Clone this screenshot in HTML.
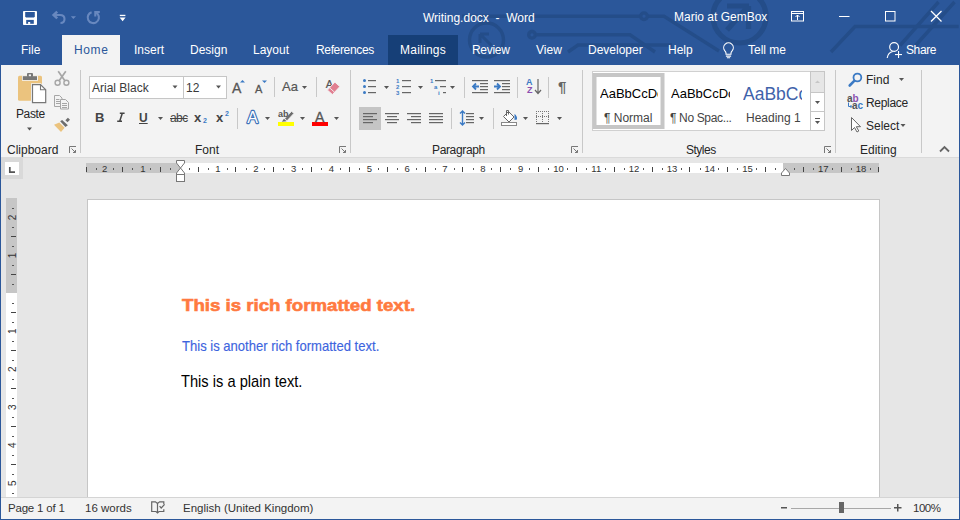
<!DOCTYPE html>
<html><head><meta charset="utf-8">
<style>
*{margin:0;padding:0;box-sizing:border-box}
html,body{width:960px;height:520px;overflow:hidden}
body{position:relative;background:#2B579A;font-family:"Liberation Sans",sans-serif;font-size:12px;color:#262626}
.a{position:absolute}
.t{position:absolute;white-space:pre;line-height:12px;font-size:12px;z-index:3}
.w{color:#fff}
svg{position:absolute;overflow:visible}
#ribbon{position:absolute;left:1px;top:65px;width:958px;height:93px;background:#F3F3F3;border-bottom:1px solid #DADADA}
#docarea{position:absolute;left:1px;top:158px;width:958px;height:339px;background:#E6E6E6}
#status{position:absolute;z-index:2;left:1px;top:497px;width:958px;height:22px;background:#F3F3F3;border-top:1px solid #D4D4D4}
.sep{position:absolute;width:1px;background:#C8C8C8}
.dd{position:absolute;width:0;height:0;border-left:2.5px solid transparent;border-right:2.5px solid transparent;border-top:3px solid #555}
</style></head><body>

<!-- title bar circuit pattern -->
<svg class="a" style="left:0;top:0" width="960" height="65" viewBox="0 0 960 65">
 <g fill="none" stroke="#244D89" stroke-width="3.4">
  <circle cx="486.5" cy="40" r="17"/>
  <path d="M480 34h9M480 34v9M480.5 34.5l11 11" stroke-width="3"/>
  <path d="M462 16.2H640.5M647.5 16.2H664L719 51"/>
  <circle cx="644" cy="16.2" r="3.3"/>
  <circle cx="532" cy="34.8" r="3.3"/>
  <path d="M535.3 34.8H630L655 52"/>
  <path d="M568 52l10-7H672"/>
  <circle cx="739.5" cy="16.5" r="26.5" stroke-width="5.2"/>
  <path d="M727 6h22M748.5 6v23M748.5 6L727 30" stroke-width="5.2"/>
  <path d="M831 52l24-25.5H958.7"/>
  <path d="M938.5 2L900 45.5M954.5 2L915.5 45.5"/>
 </g>
</svg>

<!-- Title bar -->
<div class="t w" style="left:423px;top:12px">Writing.docx  -  Word</div>
<div class="t w" style="left:674px;top:11px">Mario at GemBox</div>

<!-- tabs -->
<div class="a" style="left:62px;top:35px;width:58px;height:30px;background:#F3F3F3"></div>
<div class="a" style="left:388px;top:35px;width:70px;height:30px;background:#163F77"></div>
<div class="t w" style="left:21px;top:44px">File</div>
<div class="t" style="left:74px;top:44px;color:#2B579A;letter-spacing:0.6px">Home</div>
<div class="t w" style="left:134px;top:44px">Insert</div>
<div class="t w" style="left:190px;top:44px">Design</div>
<div class="t w" style="left:253px;top:44px">Layout</div>
<div class="t w" style="left:316px;top:44px;letter-spacing:-0.35px">References</div>
<div class="t w" style="left:400px;top:44px;letter-spacing:0.25px">Mailings</div>
<div class="t w" style="left:472px;top:44px;letter-spacing:-0.3px">Review</div>
<div class="t w" style="left:536px;top:44px">View</div>
<div class="t w" style="left:588px;top:44px">Developer</div>
<div class="t w" style="left:668px;top:44px">Help</div>
<div class="t w" style="left:748px;top:44px">Tell me</div>
<div class="t w" style="left:906px;top:44px;letter-spacing:-0.4px">Share</div>

<div id="ribbon"></div>
<div id="docarea"></div>
<div id="status"></div>


<svg class="a" style="left:0;top:0;z-index:1" width="960" height="520" viewBox="0 0 960 520">
<rect x="1" y="158" width="22" height="21" fill="#D9D9D9"/><rect x="5" y="162" width="14" height="13" fill="#fff"/>
<path d="M9.8 167v5.2H15" fill="none" stroke="#555" stroke-width="1.7"/>
<rect x="86" y="163" width="793" height="10" fill="#C6C6C6"/>
<rect x="180" y="163" width="603" height="10" fill="#fff"/>
<rect x="86" y="167" width="1" height="5" fill="#444"/>
<rect x="122" y="167" width="1" height="5" fill="#444"/>
<rect x="160" y="167" width="1" height="5" fill="#444"/>
<rect x="96" y="168" width="1" height="2" fill="#555"/>
<rect x="113" y="168" width="1" height="2" fill="#555"/>
<rect x="132" y="168" width="1" height="2" fill="#555"/>
<rect x="150" y="168" width="1" height="2" fill="#555"/>
<rect x="170" y="168" width="1" height="2" fill="#555"/>
<text x="104.6" y="172" font-size="9.5" text-anchor="middle" fill="#333" font-family="Liberation Sans">2</text>
<text x="142.8" y="172" font-size="9.5" text-anchor="middle" fill="#333" font-family="Liberation Sans">1</text>
<rect x="189" y="168" width="1" height="2" fill="#555"/>
<rect x="198" y="167" width="1" height="5" fill="#444"/>
<rect x="208" y="168" width="1" height="2" fill="#555"/>
<text x="218.0" y="172" font-size="9.5" text-anchor="middle" fill="#333" font-family="Liberation Sans">1</text>
<rect x="227" y="168" width="1" height="2" fill="#555"/>
<rect x="235" y="167" width="1" height="5" fill="#444"/>
<rect x="246" y="168" width="1" height="2" fill="#555"/>
<text x="255.8" y="172" font-size="9.5" text-anchor="middle" fill="#333" font-family="Liberation Sans">2</text>
<rect x="264" y="168" width="1" height="2" fill="#555"/>
<rect x="273" y="167" width="1" height="5" fill="#444"/>
<rect x="283" y="168" width="1" height="2" fill="#555"/>
<text x="293.6" y="172" font-size="9.5" text-anchor="middle" fill="#333" font-family="Liberation Sans">3</text>
<rect x="302" y="168" width="1" height="2" fill="#555"/>
<rect x="311" y="167" width="1" height="5" fill="#444"/>
<rect x="321" y="168" width="1" height="2" fill="#555"/>
<text x="331.5" y="172" font-size="9.5" text-anchor="middle" fill="#333" font-family="Liberation Sans">4</text>
<rect x="340" y="168" width="1" height="2" fill="#555"/>
<rect x="349" y="167" width="1" height="5" fill="#444"/>
<rect x="359" y="168" width="1" height="2" fill="#555"/>
<text x="369.3" y="172" font-size="9.5" text-anchor="middle" fill="#333" font-family="Liberation Sans">5</text>
<rect x="378" y="168" width="1" height="2" fill="#555"/>
<rect x="387" y="167" width="1" height="5" fill="#444"/>
<rect x="397" y="168" width="1" height="2" fill="#555"/>
<text x="407.1" y="172" font-size="9.5" text-anchor="middle" fill="#333" font-family="Liberation Sans">6</text>
<rect x="416" y="168" width="1" height="2" fill="#555"/>
<rect x="425" y="167" width="1" height="5" fill="#444"/>
<rect x="435" y="168" width="1" height="2" fill="#555"/>
<text x="445.0" y="172" font-size="9.5" text-anchor="middle" fill="#333" font-family="Liberation Sans">7</text>
<rect x="454" y="168" width="1" height="2" fill="#555"/>
<rect x="462" y="167" width="1" height="5" fill="#444"/>
<rect x="473" y="168" width="1" height="2" fill="#555"/>
<text x="482.8" y="172" font-size="9.5" text-anchor="middle" fill="#333" font-family="Liberation Sans">8</text>
<rect x="491" y="168" width="1" height="2" fill="#555"/>
<rect x="500" y="167" width="1" height="5" fill="#444"/>
<rect x="510" y="168" width="1" height="2" fill="#555"/>
<text x="520.6" y="172" font-size="9.5" text-anchor="middle" fill="#333" font-family="Liberation Sans">9</text>
<rect x="529" y="168" width="1" height="2" fill="#555"/>
<rect x="538" y="167" width="1" height="5" fill="#444"/>
<rect x="548" y="168" width="1" height="2" fill="#555"/>
<text x="558.5" y="172" font-size="9.5" text-anchor="middle" fill="#333" font-family="Liberation Sans">10</text>
<rect x="567" y="168" width="1" height="2" fill="#555"/>
<rect x="576" y="167" width="1" height="5" fill="#444"/>
<rect x="586" y="168" width="1" height="2" fill="#555"/>
<text x="596.3" y="172" font-size="9.5" text-anchor="middle" fill="#333" font-family="Liberation Sans">11</text>
<rect x="605" y="168" width="1" height="2" fill="#555"/>
<rect x="614" y="167" width="1" height="5" fill="#444"/>
<rect x="624" y="168" width="1" height="2" fill="#555"/>
<text x="634.1" y="172" font-size="9.5" text-anchor="middle" fill="#333" font-family="Liberation Sans">12</text>
<rect x="643" y="168" width="1" height="2" fill="#555"/>
<rect x="652" y="167" width="1" height="5" fill="#444"/>
<rect x="662" y="168" width="1" height="2" fill="#555"/>
<text x="672.0" y="172" font-size="9.5" text-anchor="middle" fill="#333" font-family="Liberation Sans">13</text>
<rect x="681" y="168" width="1" height="2" fill="#555"/>
<rect x="689" y="167" width="1" height="5" fill="#444"/>
<rect x="700" y="168" width="1" height="2" fill="#555"/>
<text x="709.8" y="172" font-size="9.5" text-anchor="middle" fill="#333" font-family="Liberation Sans">14</text>
<rect x="718" y="168" width="1" height="2" fill="#555"/>
<rect x="727" y="167" width="1" height="5" fill="#444"/>
<rect x="737" y="168" width="1" height="2" fill="#555"/>
<text x="747.6" y="172" font-size="9.5" text-anchor="middle" fill="#333" font-family="Liberation Sans">15</text>
<rect x="756" y="168" width="1" height="2" fill="#555"/>
<rect x="765" y="167" width="1" height="5" fill="#444"/>
<rect x="775" y="168" width="1" height="2" fill="#555"/>
<rect x="794" y="168" width="1" height="2" fill="#555"/>
<rect x="803" y="167" width="1" height="5" fill="#444"/>
<rect x="813" y="168" width="1" height="2" fill="#555"/>
<text x="823.3" y="172" font-size="9.5" text-anchor="middle" fill="#333" font-family="Liberation Sans">17</text>
<rect x="832" y="168" width="1" height="2" fill="#555"/>
<rect x="841" y="167" width="1" height="5" fill="#444"/>
<rect x="851" y="168" width="1" height="2" fill="#555"/>
<text x="861.1" y="172" font-size="9.5" text-anchor="middle" fill="#333" font-family="Liberation Sans">18</text>
<rect x="870" y="168" width="1" height="2" fill="#555"/>
<rect x="878" y="167" width="1" height="5" fill="#444"/>
<path d="M176.5 160.5h8v2.5l-4 5-4-5z" fill="#fff" stroke="#777"/>
<path d="M180.5 168l4 5v1.5h-8V173z" fill="#fff" stroke="#777"/>
<rect x="176.5" y="174.5" width="8" height="7" fill="#fff" stroke="#777"/>
<path d="M781.5 175.5v-2.5l4-4.5 4 4.5v2.5z" fill="#fff" stroke="#777"/>
<rect x="6" y="198" width="11" height="95" fill="#C6C6C6"/>
<rect x="6" y="293" width="11" height="204" fill="#fff"/>
<rect x="12" y="208" width="2" height="1" fill="#555"/>
<text transform="translate(16 217.4) rotate(-90)" x="0" y="0" font-size="10" text-anchor="middle" fill="#333" font-family="Liberation Sans">2</text>
<rect x="12" y="227" width="2" height="1" fill="#555"/>
<rect x="11" y="236" width="5" height="1" fill="#444"/>
<rect x="12" y="246" width="2" height="1" fill="#555"/>
<text transform="translate(16 255.4) rotate(-90)" x="0" y="0" font-size="10" text-anchor="middle" fill="#333" font-family="Liberation Sans">1</text>
<rect x="12" y="265" width="2" height="1" fill="#555"/>
<rect x="11" y="274" width="5" height="1" fill="#444"/>
<rect x="12" y="284" width="2" height="1" fill="#555"/>
<rect x="12" y="303" width="2" height="1" fill="#555"/>
<rect x="11" y="312" width="5" height="1" fill="#444"/>
<rect x="12" y="322" width="2" height="1" fill="#555"/>
<text transform="translate(16 331.2) rotate(-90)" x="0" y="0" font-size="10" text-anchor="middle" fill="#333" font-family="Liberation Sans">1</text>
<rect x="12" y="341" width="2" height="1" fill="#555"/>
<rect x="11" y="350" width="5" height="1" fill="#444"/>
<rect x="12" y="360" width="2" height="1" fill="#555"/>
<text transform="translate(16 369.2) rotate(-90)" x="0" y="0" font-size="10" text-anchor="middle" fill="#333" font-family="Liberation Sans">2</text>
<rect x="12" y="379" width="2" height="1" fill="#555"/>
<rect x="11" y="388" width="5" height="1" fill="#444"/>
<rect x="12" y="398" width="2" height="1" fill="#555"/>
<text transform="translate(16 407.2) rotate(-90)" x="0" y="0" font-size="10" text-anchor="middle" fill="#333" font-family="Liberation Sans">3</text>
<rect x="12" y="417" width="2" height="1" fill="#555"/>
<rect x="11" y="426" width="5" height="1" fill="#444"/>
<rect x="12" y="436" width="2" height="1" fill="#555"/>
<text transform="translate(16 445.1) rotate(-90)" x="0" y="0" font-size="10" text-anchor="middle" fill="#333" font-family="Liberation Sans">4</text>
<rect x="12" y="455" width="2" height="1" fill="#555"/>
<rect x="11" y="464" width="5" height="1" fill="#444"/>
<rect x="12" y="474" width="2" height="1" fill="#555"/>
<text transform="translate(16 483.1) rotate(-90)" x="0" y="0" font-size="10" text-anchor="middle" fill="#333" font-family="Liberation Sans">5</text>
<rect x="12" y="493" width="2" height="1" fill="#555"/>
<rect x="87.5" y="199.5" width="792" height="300" fill="#fff" stroke="#C6C6C6"/>
</svg>
<!-- DOCUMENT TEXT -->
<div class="t" style="left:182px;top:297.3px;font-size:16.5px;line-height:16px;font-weight:bold;color:#FF7A40;-webkit-text-stroke:0.6px #FF7A40;transform-origin:0 0;transform:scale(1.13,1.0)">This is rich formatted text.</div>
<div class="t" style="left:182px;top:338px;font-size:15px;line-height:15px;color:#3D64DE;-webkit-text-stroke:0.15px #3D64DE;transform-origin:0 0;transform:scaleX(0.87)">This is another rich formatted text.</div>
<div class="t" style="left:181px;top:374px;font-size:14.67px;line-height:15px;color:#000;transform-origin:0 0;transform:scaleY(1.09)">This is a plain text.</div>

<!-- STATUS BAR -->
<div class="t" style="left:8px;top:502px;font-size:11.5px;color:#333;letter-spacing:-0.2px">Page 1 of 1</div>
<div class="t" style="left:85px;top:502px;font-size:11.5px;color:#333">16 words</div>
<div class="t" style="left:183px;top:502px;font-size:11.5px;color:#333">English (United Kingdom)</div>
<div class="t" style="left:913px;top:502px;font-size:11.5px;color:#333;letter-spacing:-0.5px">100%</div>
<svg class="a" style="left:0;top:0;z-index:3" width="960" height="520" viewBox="0 0 960 520">
 <g fill="none" stroke="#666" stroke-width="1.2">
  <path d="M163.8 504.2V501.8H159.6L157.5 503.5L155.4 501.8H151.7V511.5H156L157.5 513L159 511.5H163.8V509.3"/>
  <path d="M157.5 503.5V512.5"/>
  <path d="M159.6 506.2L161.2 508L164.6 504.3"/>
 </g>
 <rect x="781" y="507" width="6" height="1.5" fill="#555"/>
 <rect x="791" y="508" width="100" height="1" fill="#A8A8A8"/>
 <rect x="839" y="502" width="5" height="11" fill="#666"/>
 <rect x="894" y="507" width="7.5" height="1.5" fill="#555"/>
 <rect x="897" y="504" width="1.5" height="7.5" fill="#555"/>
</svg>

<!-- TITLE BAR ICONS -->
<svg class="a" style="left:0;top:0;z-index:1" width="960" height="65" viewBox="0 0 960 65">
 <rect x="23" y="11" width="14" height="14" rx="0.8" fill="#fff"/>
 <path d="M25.2 12H34.8V16.6L34 17.4H26L25.2 16.6Z" fill="#2B579A"/>
 <rect x="26.2" y="19.9" width="7.6" height="3.9" fill="#2B579A"/>
 <rect x="28.1" y="22" width="2.1" height="1.9" fill="#fff"/>
 <g fill="none" stroke="#6888BF" stroke-width="2.1">
  <path d="M54 15h6q4.5 0 4.5 4t-4 4"/><path d="M57.2 11.6L53.6 15L57.2 18.4" stroke-width="2.5"/>
  <path d="M91.6 12.2A5.6 5.6 0 1 0 97.8 14.2L95.6 12"/><path d="M99.8 12H95.3V16.5"/>
 </g>
 <path d="M70.8 16.3h5.2l-2.6 2.6z" fill="#6888BF"/>
 <rect x="119.8" y="14.8" width="5.6" height="1.3" fill="#fff"/>
 <path d="M119.6 17.4h6l-3 3.8z" fill="#fff"/>
 <g fill="none" stroke="#fff" stroke-width="1">
  <rect x="791.5" y="11.5" width="12" height="9.5"/>
  <path d="M791.5 13.5h12M797.5 20v-5M795.5 17l2-2 2 2"/>
  <path d="M839 16.5h10.5"/>
  <rect x="885.5" y="11.5" width="9.5" height="9.5"/>
  <path d="M931 11l10.5 10.5M941.5 11L931 21.5" stroke-width="1.25"/>
 </g>
 <!-- lightbulb -->
 <g fill="none" stroke="#fff" stroke-width="1.1">
  <path d="M726 54.3V53q0-1-1.3-2.4a4.8 4.8 0 1 1 7.6 0q-1.3 1.4-1.3 2.4v1.3z"/>
  <path d="M725.9 56.1h5.2M726.9 57.7h3.2"/>
 </g>
 <!-- share person -->
 <g fill="none" stroke="#fff" stroke-width="1.15">
  <circle cx="894.1" cy="47" r="4.4"/>
  <path d="M887.2 58q0.8-5.5 5.6-6.5"/>
 </g>
 <rect x="895" y="54" width="7" height="1.1" fill="#fff"/>
 <rect x="898" y="51" width="1.1" height="7" fill="#fff"/>
</svg>

<!-- RIBBON TEXT -->
<div class="t" style="left:16px;top:108px;letter-spacing:-0.4px">Paste</div>
<div class="t" style="left:7px;top:144px">Clipboard</div>
<div class="t" style="left:92px;top:82px;color:#3a3a3a">Arial Black</div>
<div class="t" style="left:186px;top:82px;color:#3a3a3a">12</div>
<div class="t" style="left:195px;top:144px">Font</div>
<div class="t" style="left:432px;top:144px;letter-spacing:-0.35px">Paragraph</div>
<div class="t" style="left:686px;top:144px;letter-spacing:-0.5px">Styles</div>
<div class="t" style="left:860px;top:144px">Editing</div>
<div class="t" style="left:866px;top:74px">Find</div>
<div class="t" style="left:866px;top:97px;letter-spacing:-0.3px">Replace</div>
<div class="t" style="left:866px;top:120px">Select</div>
<!-- font buttons -->
<div class="t" style="left:95px;top:112px;font-weight:bold;font-size:13px;color:#444">B</div>

<div class="t" style="left:139px;top:112px;font-weight:bold;font-size:12px;color:#444;text-decoration:underline">U</div>
<div class="t" style="left:170px;top:112px;font-size:12px;color:#444;letter-spacing:-0.6px;text-decoration:line-through">abc</div>
<div class="t" style="left:194px;top:112px;font-weight:bold;font-size:13px;color:#444">x</div>
<div class="t" style="left:203px;top:117px;font-weight:bold;font-size:7px;line-height:7px;color:#3B7AC4">2</div>
<div class="t" style="left:216px;top:112px;font-weight:bold;font-size:13px;color:#444">x</div>
<div class="t" style="left:225px;top:110px;font-weight:bold;font-size:7px;line-height:7px;color:#3B7AC4">2</div>
<div class="t" style="left:232px;top:81px;font-size:14px;line-height:14px;color:#555;-webkit-text-stroke:0.3px #555">A</div>
<div class="t" style="left:255px;top:84px;font-size:11px;line-height:11px;color:#555;-webkit-text-stroke:0.3px #555">A</div>
<div class="t" style="left:282px;top:80px;font-size:13px;line-height:13px;color:#555;-webkit-text-stroke:0.2px #555">Aa</div>


<div class="t" style="left:278px;top:110px;font-size:9px;line-height:9px;font-weight:bold;color:#555">ab</div>
<div class="t" style="left:315px;top:110px;font-size:14px;line-height:14px;color:#555;-webkit-text-stroke:0.3px #555">A</div>
<!-- numbering -->
<div class="t" style="left:396px;top:78px;font-size:6px;line-height:6px;font-weight:bold;color:#3B7AC4">1</div>
<div class="t" style="left:396px;top:84px;font-size:6px;line-height:6px;font-weight:bold;color:#3B7AC4">2</div>
<div class="t" style="left:396px;top:90px;font-size:6px;line-height:6px;font-weight:bold;color:#3B7AC4">3</div>
<div class="t" style="left:430px;top:78px;font-size:6px;line-height:6px;font-weight:bold;color:#3B7AC4">1</div>
<div class="t" style="left:434px;top:84px;font-size:6px;line-height:6px;font-weight:bold;color:#3B7AC4">a</div>
<div class="t" style="left:438px;top:90px;font-size:6px;line-height:6px;font-weight:bold;color:#3B7AC4">i</div>
<div class="t" style="left:526px;top:78px;font-size:9px;line-height:9px;font-weight:bold;color:#3B7AC4">A</div>
<div class="t" style="left:527px;top:86px;font-size:9px;line-height:9px;font-weight:bold;color:#8B4FB0">Z</div>
<div class="t" style="left:558px;top:79px;font-size:15px;line-height:15px;font-weight:bold;color:#666">&#182;</div>
<!-- gallery -->
<div class="t" style="left:600px;top:87px;width:58px;overflow:hidden;font-size:13px;line-height:13px;color:#000">AaBbCcDc</div>
<div class="t" style="left:604px;top:112px;color:#444">&#182; Normal</div>
<div class="t" style="left:671px;top:87px;width:59px;overflow:hidden;font-size:13px;line-height:13px;color:#000">AaBbCcDc</div>
<div class="t" style="left:670px;top:112px;color:#444;letter-spacing:-0.35px">&#182; No Spac...</div>
<div class="t" style="left:743px;top:86px;width:59px;overflow:hidden;font-size:17.5px;line-height:17.5px;color:#3F62AA">AaBbCc</div>
<div class="t" style="left:746px;top:112px;color:#444">Heading 1</div>
<div class="t" style="left:847px;top:94px;font-size:10px;line-height:10px;font-weight:bold;color:#555">a<span style="color:#8B4FB0">b</span></div>
<div class="t" style="left:852px;top:101px;font-size:10px;line-height:10px;font-weight:bold;color:#555">a<span style="color:#3B7AC4">c</span></div>

<!-- RIBBON CONTENT -->
<svg class="a" style="left:0;top:0" width="960" height="200" viewBox="0 0 960 200">
 <rect x="89.5" y="76.5" width="137" height="22" fill="#fff" stroke="#C6C6C6"/>
 <rect x="183" y="77" width="1" height="21" fill="#C6C6C6"/>
 <!-- separators -->
 <g fill="#C8C8C8">
  <rect x="80" y="70" width="1" height="83"/>
  <rect x="350" y="70" width="1" height="83"/>
  <rect x="582" y="70" width="1" height="83"/>
  <rect x="835" y="70" width="1" height="83"/>
  <rect x="921" y="70" width="1" height="83"/>
  <rect x="274" y="77" width="1" height="20"/>
  <rect x="316" y="77" width="1" height="20"/>
  <rect x="237" y="108" width="1" height="21"/>
  <rect x="464" y="77" width="1" height="21"/>
  <rect x="517" y="77" width="1" height="21"/>
  <rect x="548" y="77" width="1" height="21"/>
  <rect x="451" y="108" width="1" height="21"/>
  <rect x="493" y="108" width="1" height="21"/>
 </g>
 <!-- dropdown arrows -->
 <g fill="#555">
  <path d="M27 127.5h5l-2.5 3z"/>
  <path d="M172.5 85.5h5l-2.5 3z"/>
  <path d="M216 85.5h5l-2.5 3z"/>
  <path d="M158 117h5l-2.5 3z"/>
  <path d="M302 86h5l-2.5 3z"/>
  <path d="M265 117h5l-2.5 3z"/>
  <path d="M300 117h5l-2.5 3z"/>
  <path d="M334 117h5l-2.5 3z"/>
  <path d="M384 86h5l-2.5 3z"/>
  <path d="M418 86h5l-2.5 3z"/>
  <path d="M450 86h5l-2.5 3z"/>
  <path d="M479 117h5l-2.5 3z"/>
  <path d="M523 117h5l-2.5 3z"/>
  <path d="M557 117h5l-2.5 3z"/>
  <path d="M899 78h5l-2.5 3z"/>
  <path d="M900.5 124h5l-2.5 3z"/>
 </g>
 <!-- dialog launchers -->
 <g fill="none" stroke="#777" stroke-width="1">
  <path d="M69.5 153V146.5H76"/><path d="M71.5 148.5l4 4M73 152.5h2.5V150"/>
  <path d="M339.5 153V146.5H346"/><path d="M341.5 148.5l4 4M343 152.5h2.5V150"/>
  <path d="M571.5 153V146.5H578"/><path d="M573.5 148.5l4 4M575 152.5h2.5V150"/>
  <path d="M824.5 153V146.5H831"/><path d="M826.5 148.5l4 4M828 152.5h2.5V150"/>
 </g>
 <!-- collapse caret -->
 <path d="M940 151.5l4.5-4.5 4.5 4.5" fill="none" stroke="#666" stroke-width="1.8"/>

 <!-- CLIPBOARD -->
 <rect x="18" y="75.8" width="24" height="25" rx="1.5" fill="#EBC37E"/>
 <rect x="22" y="75.5" width="16" height="5.3" fill="#F3F3F3"/>
 <rect x="22.8" y="76.2" width="14.2" height="3.8" fill="#777"/>
 <rect x="27" y="73" width="6" height="4" rx="1" fill="#777"/>
 <rect x="28.8" y="74.4" width="2.2" height="1.8" fill="#F3F3F3"/>
 <path d="M31 83.2H41l5.8 5.8V103.5H31z" fill="#F3F3F3"/>
 <path d="M32.5 84.6H40.5l5.2 5.2V102.6H32.5z" fill="#fff" stroke="#777" stroke-width="1.2"/>
 <path d="M40.5 84.6V89.8H45.7" fill="none" stroke="#777" stroke-width="1.1"/>
 <g fill="none" stroke="#A6A6A6" stroke-width="1.4">
  <circle cx="57.6" cy="82.8" r="2.5"/><circle cx="66.4" cy="82.8" r="2.5"/>
  <path d="M59.3 80.6L65.8 71.2M64.7 80.6L58.2 71.2" stroke-width="1.7"/>
 </g>
 <g fill="#F3F3F3" stroke="#A6A6A6">
  <path d="M54.5 95.5h5l2.5 2.5v8.5h-7.5z"/>
  <path d="M60.5 99.5h5l3 3v6.5h-8z"/>
 </g>
 <g stroke="#A6A6A6" stroke-width="1">
  <path d="M56 99.5h3.5M56 101.5h4M56 103.5h4"/>
  <path d="M62 103.5h5M62 105.5h5M62 107.5h5"/>
 </g>
 <path d="M54 124.8L59.3 122.5L64.6 127.7L61 132Z" fill="#EBC37E"/>
 <path d="M60.2 121.3L62.1 119.9L67.9 125.2L65.4 126.9Z" fill="#6D6D6D"/>
 <path d="M65.4 120.3L67.9 117.8L70 119.8L67.5 122.3Z" fill="#6D6D6D"/>
 <!-- FONT -->
 <g fill="#3B7AC4">
  <path d="M240 82.5h5l-2.5-2.5z"/>
  <path d="M262 80.5h5l-2.5 2.5z"/>
 </g>
 <path d="M119.8 113.2h4.8M117.2 121.3h4.8M122.3 113.2l-2.6 8.1" fill="none" stroke="#444" stroke-width="1.5"/>
 <!-- clear formatting eraser -->
 <text x="325.8" y="88" font-family="Liberation Sans" font-size="11" fill="#555" stroke="#555" stroke-width="0.2">A</text>
 <path d="M334.9 82.1L339.9 86.6L332.4 94.6L327.4 90.1Z" fill="#E17F91" stroke="#F3F3F3" stroke-width="1"/>
 <path d="M329.4 87.6L334.4 92.1" stroke="#F3F3F3" stroke-width="0.9"/>
 <text x="252.6" y="123.2" font-family="Liberation Sans" font-size="16" font-weight="normal" text-anchor="middle" fill="#fff" stroke="#3D72B8" stroke-width="2.3" stroke-linejoin="round" paint-order="stroke" style="paint-order:stroke">A</text>
 <!-- highlighter -->
 <path d="M284.8 118.6L291.6 111.3L293.8 113.5L287 120.8Z" fill="#6D6D6D" stroke="#F3F3F3" stroke-width="0.8"/>
 <path d="M281.8 121.8L284 118.8L286.6 121.2Z" fill="#6D6D6D"/>
 <rect x="278" y="122" width="16" height="4" fill="#FFFF00"/>
 <rect x="312" y="122" width="16" height="4" fill="#FF0000"/>
 <!-- PARAGRAPH -->
 <rect x="359" y="107" width="22" height="23" fill="#C5C5C5"/>
 <g fill="#3B7AC4">
  <circle cx="364.5" cy="80.5" r="1.5"/><circle cx="364.5" cy="86.5" r="1.5"/><circle cx="364.5" cy="92.5" r="1.5"/>
 </g>
 <g fill="#666">
  <rect x="368" y="80" width="8" height="1.2"/><rect x="368" y="86" width="8" height="1.2"/><rect x="368" y="92" width="8" height="1.2"/>
  <rect x="402" y="80" width="9" height="1.2"/><rect x="402" y="86" width="9" height="1.2"/><rect x="402" y="92" width="9" height="1.2"/>
  <rect x="435" y="80" width="11" height="1.2"/><rect x="440" y="86" width="6" height="1.2"/><rect x="443" y="92" width="3" height="1.2"/>
 </g>
 <!-- indent -->
 <g fill="#666">
  <rect x="472" y="80" width="16" height="1.2"/><rect x="480" y="83" width="8" height="1.2"/><rect x="480" y="86" width="8" height="1.2"/><rect x="480" y="89" width="8" height="1.2"/><rect x="472" y="92" width="16" height="1.2"/>
  <rect x="494" y="80" width="16" height="1.2"/><rect x="502" y="83" width="8" height="1.2"/><rect x="502" y="86" width="8" height="1.2"/><rect x="502" y="89" width="8" height="1.2"/><rect x="494" y="92" width="16" height="1.2"/>
 </g>
 <g fill="none" stroke="#3B7AC4" stroke-width="1.8">
  <path d="M473 86.5h6M476 83.5l-3 3 3 3"/>
  <path d="M494 86.5h6M497 83.5l3 3-3 3"/>
  <path d="M538 79v14M535 90l3 3.5 3-3.5" stroke="#666" stroke-width="1.2"/>
 </g>
 <!-- align -->
 <g fill="#666">
  <rect x="363" y="113" width="14" height="1.2"/><rect x="363" y="116" width="10" height="1.2"/><rect x="363" y="119" width="14" height="1.2"/><rect x="363" y="122" width="10" height="1.2"/>
  <rect x="385" y="113" width="14" height="1.2"/><rect x="387" y="116" width="10" height="1.2"/><rect x="385" y="119" width="14" height="1.2"/><rect x="387" y="122" width="10" height="1.2"/>
  <rect x="407" y="113" width="14" height="1.2"/><rect x="411" y="116" width="10" height="1.2"/><rect x="407" y="119" width="14" height="1.2"/><rect x="411" y="122" width="10" height="1.2"/>
  <rect x="429" y="113" width="14" height="1.2"/><rect x="429" y="116" width="14" height="1.2"/><rect x="429" y="119" width="14" height="1.2"/><rect x="429" y="122" width="14" height="1.2"/>
  <rect x="466" y="113" width="8" height="1.2"/><rect x="466" y="116" width="8" height="1.2"/><rect x="466" y="119" width="8" height="1.2"/><rect x="466" y="122" width="8" height="1.2"/>
 </g>
 <g fill="none" stroke="#3B7AC4" stroke-width="1.4">
  <path d="M462.5 111v14M460 113.5l2.5-2.5 2.5 2.5M460 122.5l2.5 2.5 2.5-2.5"/>
 </g>
 <!-- shading -->
 <path d="M508.5 111.5l5.5 5.5-5 5-5.5-5.5z" fill="#fff" stroke="#666"/>
 <path d="M506.5 116V110.5h2v4" fill="none" stroke="#666"/>
 <path d="M514.5 114q3 2 2.5 5.5l-2.5 0.5z" fill="#3B7AC4"/>
 <rect x="501.5" y="122.5" width="15" height="3" fill="#fff" stroke="#888"/>
 <!-- borders -->
 <g stroke="#777" stroke-width="1" stroke-dasharray="1 1" fill="none">
  <path d="M536.5 111v11M542.5 111v11M548.5 111v11M536 111.5h13M536 116.5h13"/>
 </g>
 <rect x="536" y="123" width="13" height="1.2" fill="#666"/>

 <!-- STYLES gallery -->
 <rect x="592.5" y="71.5" width="232" height="59" fill="#fff" stroke="#D0D0D0"/>
 <rect x="594.5" y="75" width="68" height="52" fill="none" stroke="#C6C6C6" stroke-width="4"/>
 <rect x="810.5" y="71.5" width="14" height="59" fill="#fff" stroke="#C6C6C6"/>
 <rect x="811" y="72" width="13" height="20" fill="#E6E6E6"/>
 <path d="M810.5 92.5h14M810.5 111.5h14" stroke="#C6C6C6"/>
 <path d="M815 83h5l-2.5-2.5z" fill="#C6C6C6"/>
 <path d="M815 101h5l-2.5 3z" fill="#555"/>
 <path d="M815 118.5h5" stroke="#555"/>
 <path d="M815 121h5l-2.5 3z" fill="#555"/>

 <!-- EDITING -->
 <path d="M848.5 102.5v4h3M850.5 105l1.5 1.5-1.5 1.5" fill="none" stroke="#3B7AC4" stroke-width="1"/>
 <g fill="none" stroke="#3B7AC4">
  <circle cx="857.4" cy="77.5" r="3.9" stroke-width="1.8"/>
  <path d="M854 81.2l-4.3 4.3" stroke-width="2.6" stroke-linecap="round"/>
 </g>
 <path d="M851.5 117.5v13l3-3 2.5 4.5 1.8-1-2.5-4.3h4.2z" fill="#fff" stroke="#666" stroke-width="1" stroke-linejoin="round"/>
</svg>


</body></html>
